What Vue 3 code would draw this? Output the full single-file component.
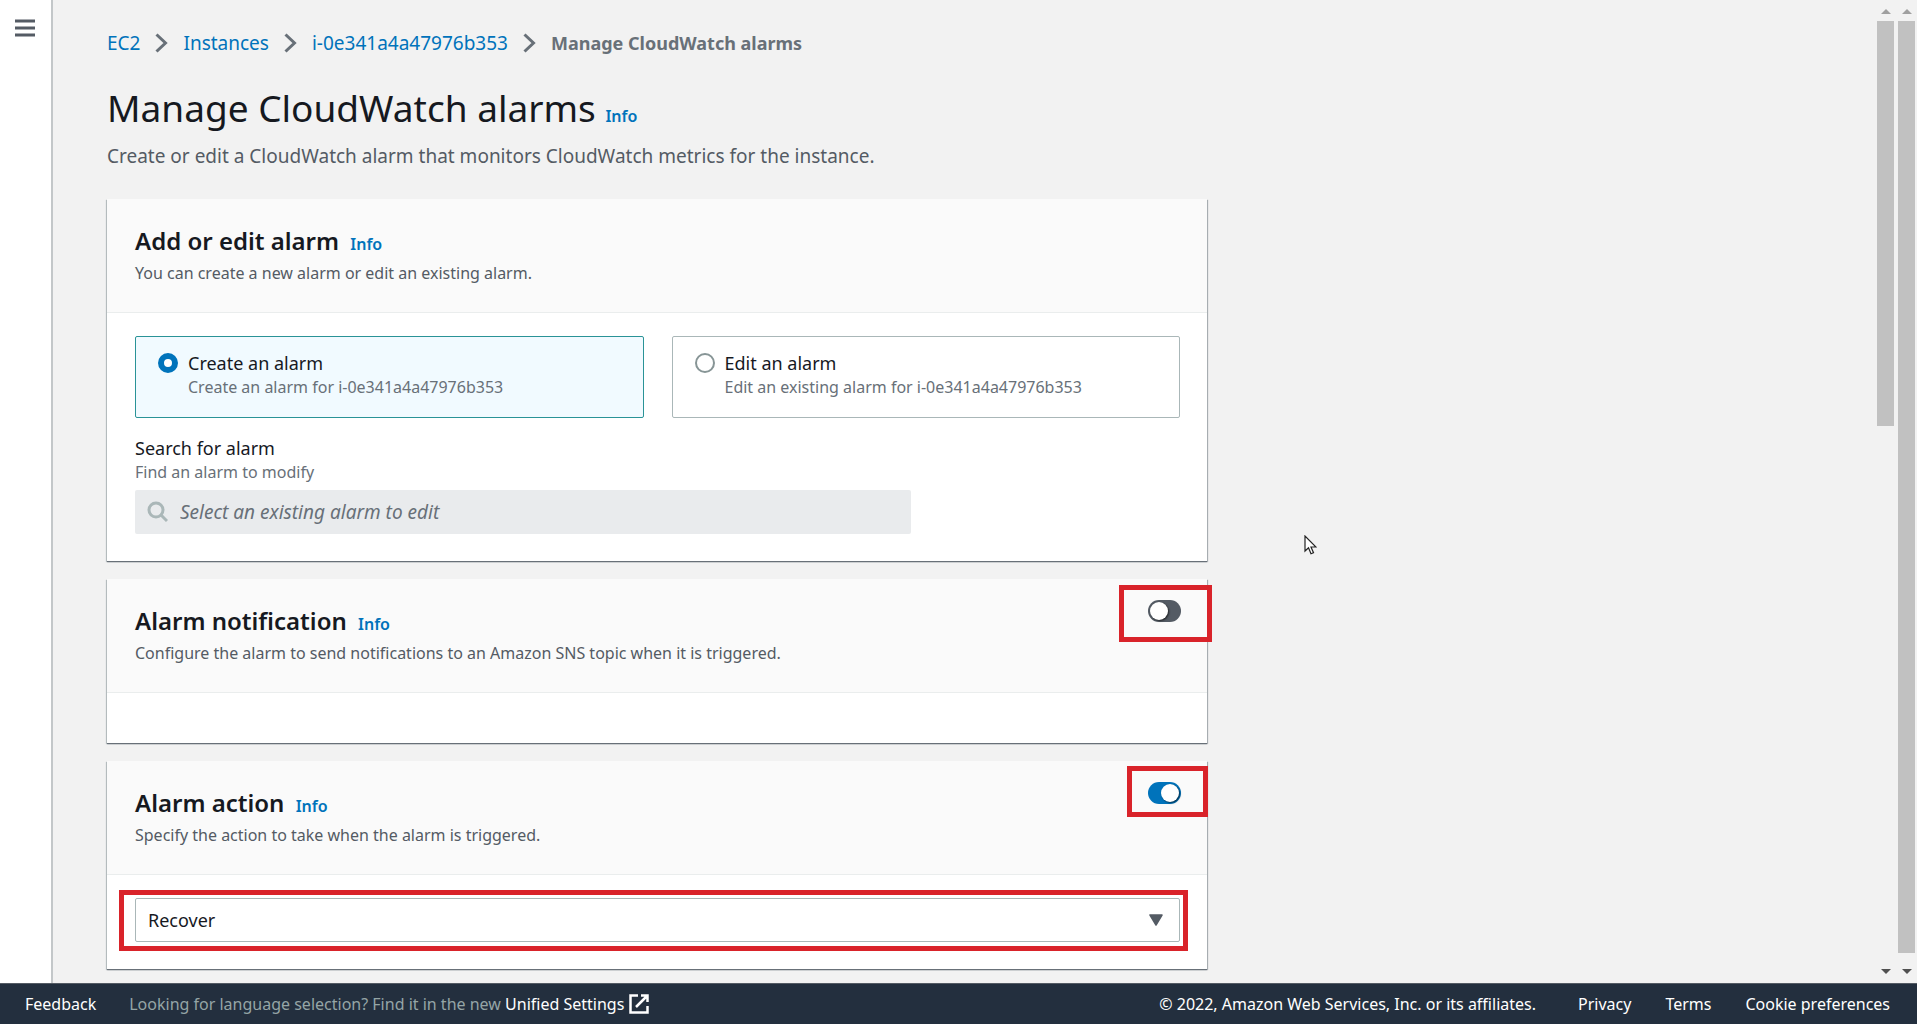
<template>
  <div class="page">
    <div class="body">
      <aside class="sidebar">
        <button class="menu" aria-label="Open navigation">
          <svg width="20" height="18" viewBox="0 0 20 18">
            <path d="M0 2h20M0 9h20M0 16h20" stroke="#545b64" stroke-width="3" />
          </svg>
        </button>
      </aside>

      <main class="content">
        <nav class="breadcrumb" aria-label="Breadcrumb">
          <template v-for="crumb in crumbs" :key="crumb">
            <a href="#">{{ crumb }}</a>
            <svg width="13" height="20" viewBox="0 0 13 20">
              <path d="M1.5 1.5 10.5 10l-9 8.5" fill="none" stroke="#687078" stroke-width="3" />
            </svg>
          </template>
          <span class="current">Manage CloudWatch alarms</span>
        </nav>

        <header class="page-header">
          <h1>Manage CloudWatch alarms <a href="#" class="info">Info</a></h1>
          <p>Create or edit a CloudWatch alarm that monitors CloudWatch metrics for the instance.</p>
        </header>

        <section class="card">
          <div class="card-header">
            <h2>Add or edit alarm <a href="#" class="info">Info</a></h2>
            <p>You can create a new alarm or edit an existing alarm.</p>
          </div>
          <div class="card-body">
            <div class="tiles">
              <label
                v-for="tile in tiles"
                :key="tile.value"
                class="tile"
                :class="{ selected: mode === tile.value }"
              >
                <input v-model="mode" type="radio" name="mode" :value="tile.value" />
                <span class="tile-text">
                  <span class="label">{{ tile.label }}</span>
                  <span class="hint">{{ tile.hint }}</span>
                </span>
              </label>
            </div>
            <div class="search-field">
              <label class="label" for="search">Search for alarm</label>
              <span class="hint">Find an alarm to modify</span>
              <div class="search">
                <svg width="22" height="22" viewBox="0 0 22 22">
                  <circle cx="10" cy="9" r="7" fill="none" stroke="#aab7b8" stroke-width="3" />
                  <path d="m15 14 6 6" stroke="#aab7b8" stroke-width="3" />
                </svg>
                <input id="search" type="text" placeholder="Select an existing alarm to edit" disabled />
              </div>
            </div>
          </div>
        </section>

        <section class="card">
          <div class="card-header">
            <h2>Alarm notification <a href="#" class="info">Info</a></h2>
            <p>Configure the alarm to send notifications to an Amazon SNS topic when it is triggered.</p>
            <input v-model="notify" type="checkbox" class="toggle" aria-label="Alarm notification" />
            <div class="mark mark-notification"></div>
          </div>
          <div class="card-body empty"></div>
        </section>

        <section class="card">
          <div class="card-header">
            <h2>Alarm action <a href="#" class="info">Info</a></h2>
            <p>Specify the action to take when the alarm is triggered.</p>
            <input v-model="actionOn" type="checkbox" class="toggle" aria-label="Alarm action" />
            <div class="mark mark-action"></div>
          </div>
          <div class="card-body">
            <div class="select">
              <select v-model="action" aria-label="Alarm action type">
                <option>Recover</option>
                <option>Stop</option>
                <option>Terminate</option>
                <option>Reboot</option>
              </select>
              <svg class="caret" width="14" height="12" viewBox="0 0 14 12">
                <path d="M1 1h12L7 11z" fill="#545b64" stroke="#545b64" stroke-width="1.5" stroke-linejoin="round" />
              </svg>
              <div class="mark mark-select"></div>
            </div>
          </div>
        </section>
      </main>

      <div v-for="bar in ['inner', 'outer']" :key="bar" class="scrollbar" :class="bar">
        <svg width="10" height="5" viewBox="0 0 10 5"><path d="M0 5 5 0l5 5z" fill="#a0a0a0" /></svg>
        <div class="track"><div class="thumb"></div></div>
        <svg width="10" height="5" viewBox="0 0 10 5"><path d="M0 0h10L5 5z" fill="#505050" /></svg>
      </div>
    </div>

    <footer class="footer">
      <a href="#" class="feedback">Feedback</a>
      <span class="language">
        Looking for language selection? Find it in the new
        <a href="#">Unified Settings</a>
      </span>
      <svg width="20" height="20" viewBox="0 0 20 20">
        <path d="M9 1.5H1.5v17h17V12M12 1.5h6.5V8M18 2 7 13" fill="none" stroke="#fff" stroke-width="2.5" />
      </svg>
      <span class="copyright">© 2022, Amazon Web Services, Inc. or its affiliates.</span>
      <a href="#">Privacy</a>
      <a href="#">Terms</a>
      <a href="#">Cookie preferences</a>
    </footer>

    <svg class="pointer" width="13" height="20" viewBox="0 0 13 20">
      <path d="M1 1v15l3.5-3.3 2.5 6 2.5-1L7 12h5z" fill="#fff" stroke="#222" stroke-width="1.2" />
    </svg>
  </div>
</template>

<script setup>
import { ref } from 'vue'

const crumbs = ['EC2', 'Instances', 'i-0e341a4a47976b353']
const tiles = [
  { value: 'create', label: 'Create an alarm', hint: 'Create an alarm for i-0e341a4a47976b353' },
  { value: 'edit', label: 'Edit an alarm', hint: 'Edit an existing alarm for i-0e341a4a47976b353' },
]

const mode = ref('create')
const notify = ref(false)
const actionOn = ref(true)
const action = ref('Recover')
</script>

<style>
body {
  margin: 0;
}
</style>

<style scoped>
* {
  box-sizing: border-box;
}

.page {
  position: relative;
  display: flex;
  flex-direction: column;
  min-height: 100vh;
  background: #f2f2f2;
  color: #16191f;
  font-family: 'Noto Sans', sans-serif;
  font-size: 18px;
  line-height: 24px;
}

a {
  color: #0073bb;
  text-decoration: none;
}

h1,
h2,
p {
  margin: 0;
}

.body {
  flex: 1;
  display: flex;
}

.sidebar {
  width: 53px;
  padding: 19px 15px;
  background: #fff;
  border-right: 2px solid #c3c7c9;
}

.menu {
  display: block;
  padding: 0;
  border: 0;
  background: none;
}

.menu svg {
  display: block;
}

.content {
  flex: 1;
  padding: 31px 54px 14px;
}

.breadcrumb {
  display: flex;
  align-items: center;
  gap: 15px;
}

.breadcrumb a {
  font-size: 19px;
}

.current {
  color: #687078;
  font-weight: 700;
}

.page-header {
  padding: 29px 0 31px;
}

h1 {
  font-size: 37px;
  font-weight: 400;
  line-height: 48px;
}

.info {
  font-size: 16px;
  font-weight: 600;
}

h2 .info {
  margin-left: 5px;
}

.page-header p {
  margin-top: 4px;
  color: #545b64;
  font-size: 19px;
}

.card {
  max-width: 1100px;
  margin-bottom: 18px;
  background: #fff;
  box-shadow: 0 1px 1px #687078, 1px 1px 1px #b5babd, -1px 1px 1px #c5cacc;
}

.card:last-child {
  margin-bottom: 0;
}

.card-header {
  position: relative;
  height: 114px;
  padding: 25px 28px;
  background: #fafafa;
  border-bottom: 1px solid #eaeded;
}

h2 {
  font-size: 24px;
  font-weight: 600;
  line-height: 33px;
}

.card-header p {
  color: #545b64;
  font-size: 16px;
}

.card-body {
  padding: 23px 27px 27px 28px;
}

.card-body.empty {
  height: 49px;
}

.tiles {
  display: flex;
  gap: 28px;
}

.tile {
  flex: 1;
  display: flex;
  gap: 10px;
  height: 82px;
  padding: 14px 22px;
  border: 1px solid #aab7b8;
  border-radius: 2px;
}

.tile.selected {
  background: #f1faff;
  border-color: #2a9397;
}

.tile input {
  appearance: none;
  width: 20px;
  height: 20px;
  margin: 2px 0;
  border: 2px solid #879596;
  border-radius: 50%;
  background: #fff;
}

.tile input:checked {
  border: 6px solid #0073bb;
}

.label,
.hint {
  display: block;
}

.hint {
  color: #687078;
  font-size: 16px;
}

.search-field {
  padding-top: 18px;
}

.search {
  display: flex;
  align-items: center;
  gap: 12px;
  max-width: 776px;
  height: 44px;
  margin-top: 6px;
  padding: 0 11px;
  background: #e9ebed;
  border-radius: 2px;
}

.search input {
  flex: 1;
  padding: 0;
  border: 0;
  background: none;
  font: inherit;
  font-size: 19px;
}

.search input::placeholder {
  color: #687078;
  font-style: italic;
}

.toggle {
  appearance: none;
  position: absolute;
  top: 21px;
  right: 26px;
  width: 33px;
  height: 22px;
  margin: 0;
  border-radius: 11px;
  background: #545b64;
}

.toggle::before {
  content: '';
  position: absolute;
  top: 2px;
  left: 2px;
  width: 18px;
  height: 18px;
  border-radius: 50%;
  background: #fff;
  box-shadow: 1px 1px 2px rgba(0, 0, 0, 0.6);
}

.toggle:checked {
  background: #0073bb;
}

.toggle:checked::before {
  left: 13px;
}

/* red highlight frames */
.mark {
  position: absolute;
  border: 5px solid #d9232a;
  pointer-events: none;
}

.mark-notification {
  top: 6px;
  right: -5px;
  width: 93px;
  height: 57px;
}

.mark-action {
  top: 5px;
  right: -1px;
  width: 81px;
  height: 51px;
}

.mark-select {
  inset: -8px -8px -9px -16px;
}

.select {
  position: relative;
}

.select select {
  appearance: none;
  display: block;
  width: 100%;
  height: 44px;
  padding: 0 12px;
  border: 1px solid #aab7b8;
  border-radius: 2px;
  background: #fff;
  color: #16191f;
  font: inherit;
}

.caret {
  position: absolute;
  top: 16px;
  right: 17px;
}

.scrollbar {
  display: flex;
  flex-direction: column;
  align-items: center;
  gap: 7px;
  width: 17px;
  margin-right: 4px;
  padding: 9px 0;
}

.scrollbar.outer {
  margin-right: 2px;
}

.track {
  flex: 1;
  width: 100%;
}

.thumb {
  height: 99%;
  background: #c1c1c1;
}

.inner .thumb {
  height: 43%;
}

.footer {
  display: flex;
  align-items: center;
  height: 41px;
  padding: 0 27px 0 25px;
  border-top: 1px solid #545b64;
  background: #232f3e;
  color: #fff;
  font-size: 16px;
}

.footer a {
  color: #fff;
}

.footer > a + a {
  margin-left: 34px;
}

.language {
  margin: 0 5px 0 33px;
  color: #95a5a6;
}

.copyright {
  margin: 0 42px 0 auto;
}

.pointer {
  position: absolute;
  top: 535px;
  left: 1304px;
}
</style>
